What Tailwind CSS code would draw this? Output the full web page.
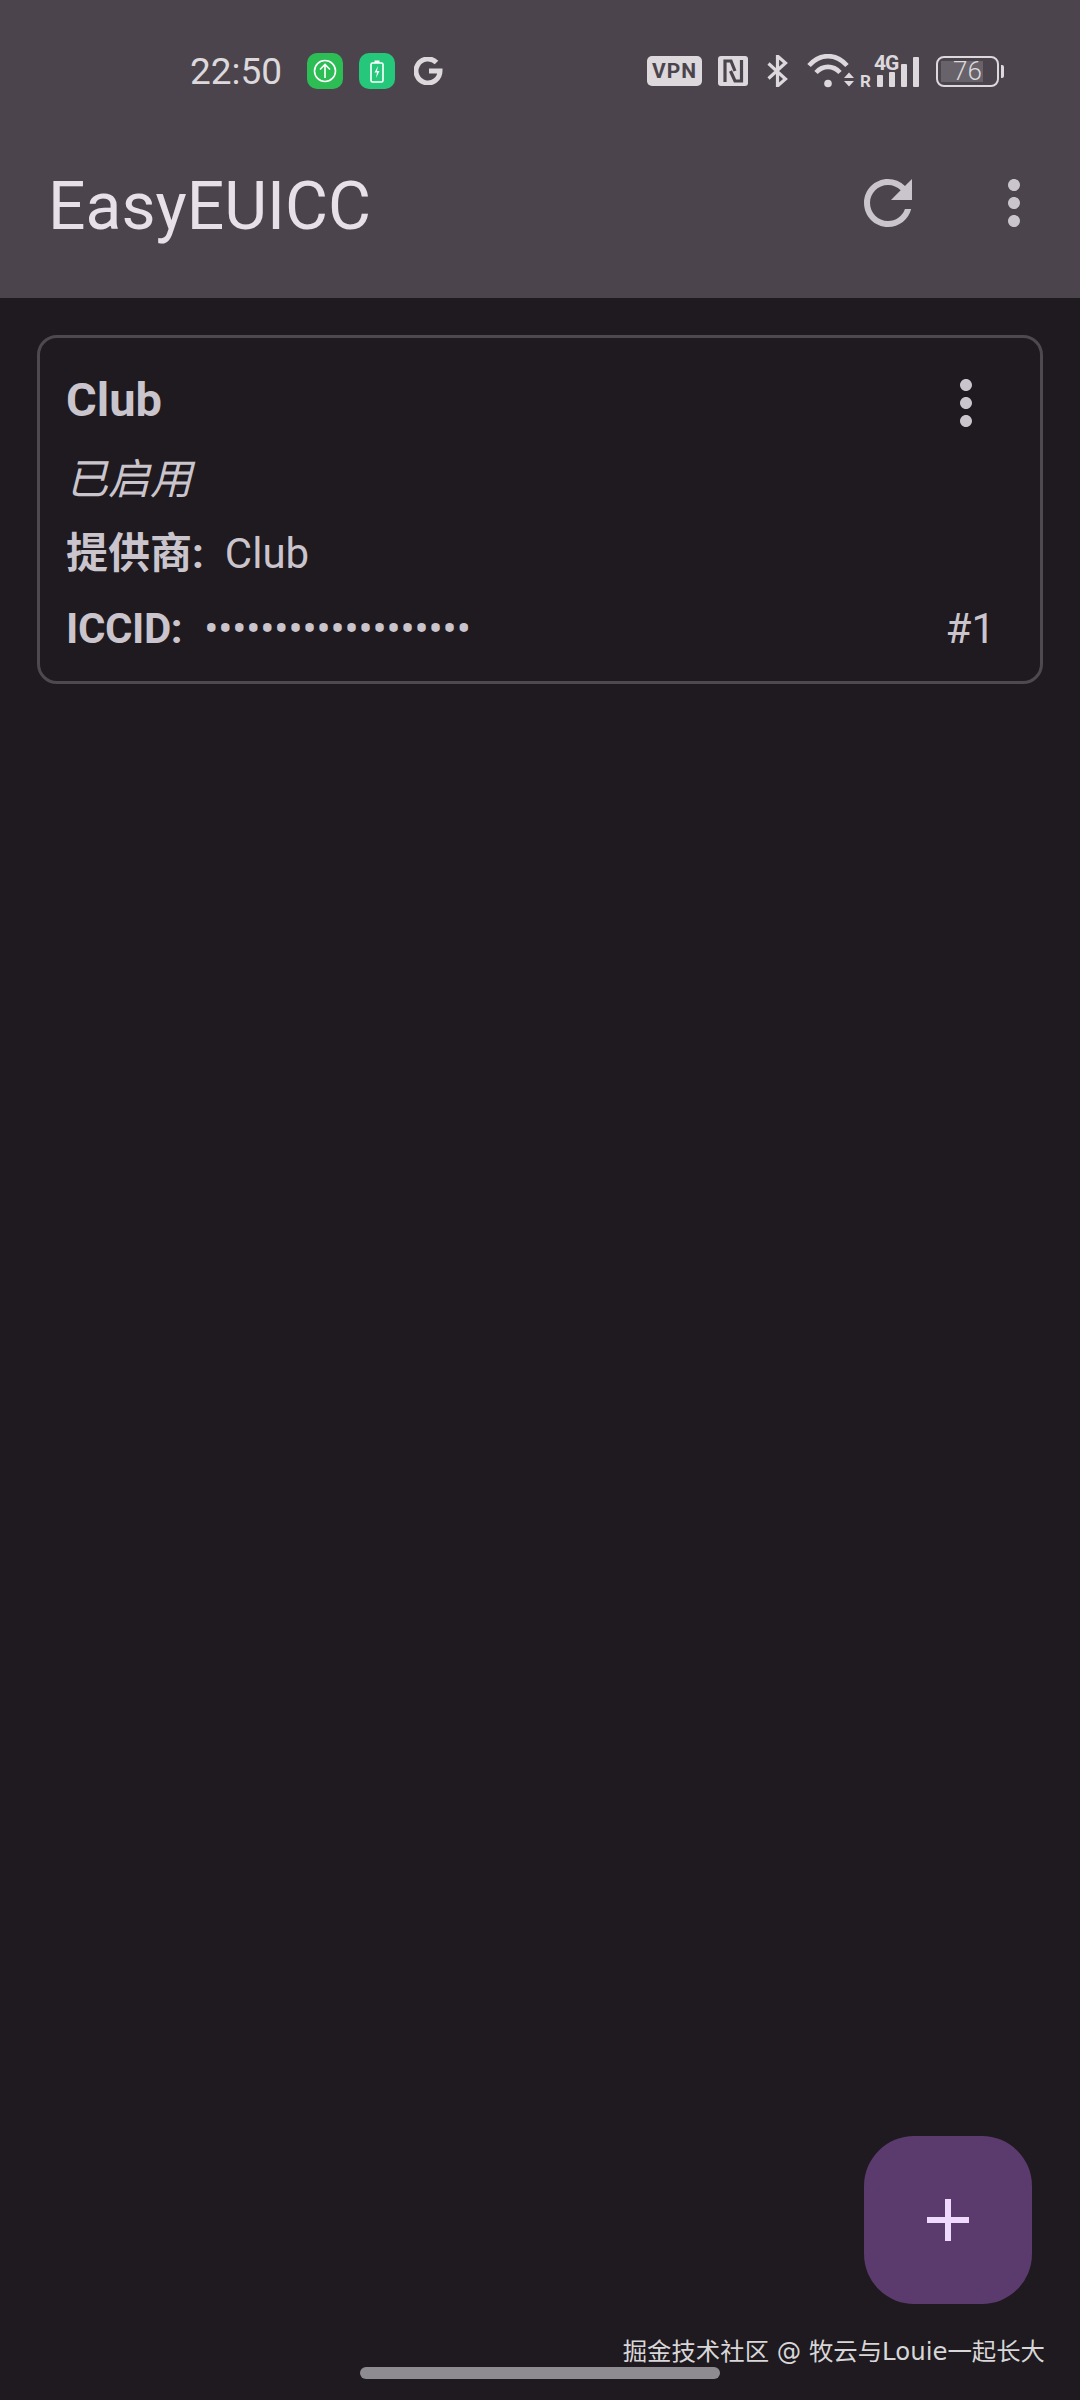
<!DOCTYPE html>
<html lang="zh-CN">
<head>
    <meta charset="UTF-8">
    <meta name="viewport" content="width=device-width, initial-scale=1">
    <title>EasyEUICC</title>
    <script src="https://cdn.jsdelivr.net/npm/@tailwindcss/browser@4"></script>
</head>
<body class="relative w-[1080px] h-[2400px] overflow-hidden bg-[#1e1a1f] font-['Roboto','Noto_Sans_CJK_SC',sans-serif] text-[#cac4cc]">
    <header class="h-[298px] bg-[#4b444c]">
        <!-- Status bar -->
        <div class="h-[142px] flex items-center text-[#dcd8dc]">
            <span class="ml-[190px] w-[117px] text-[37px] font-normal leading-none">22:50</span>
            <svg class="w-[36px] h-[36px]" viewBox="0 0 36 36">
                <rect width="36" height="36" rx="10" fill="#2dbd55"/>
                <circle cx="18" cy="18" r="10.5" fill="none" stroke="#fff" stroke-width="1.6"/>
                <path d="M18 25V12M13 16.5l5-5 5 5" fill="none" stroke="#fff" stroke-width="1.6"/>
            </svg>
            <svg class="ml-[16px] w-[36px] h-[36px]" viewBox="0 0 36 36">
                <rect width="36" height="36" rx="10" fill="#25c87b"/>
                <rect x="12" y="10" width="12" height="19" rx="1.5" fill="none" stroke="#fff" stroke-width="1.6"/>
                <path d="M15.5 7.5h5V10h-5z" fill="#fff"/>
                <path d="M19 13l-3.5 6.5h2.5L17 25l3.5-7H18z" fill="#fff"/>
            </svg>
            <svg class="ml-[19px] w-[29px] h-[28px]" viewBox="0 0 29 28">
                <path d="M22.5 5.5A12 12 0 1 0 26 14H15" fill="none" stroke="#dcd8dc" stroke-width="5"/>
            </svg>
            <span class="ml-[204px] w-[55px] h-[30px] rounded-[5px] bg-[#dcd8dc] text-[#4b444c] text-[21px] font-bold leading-[30px] tracking-[1px] text-center">VPN</span>
            <svg class="ml-[16px] w-[30px] h-[30px]" viewBox="0 0 30 30">
                <rect width="30" height="30" rx="3" fill="#dcd8dc"/>
                <path d="M7 26V5h6l4 10M23.500 4v21H17l-4.500-10" fill="none" stroke="#4b444c" stroke-width="3.200"/>
            </svg>
            <svg class="ml-[19px] w-[21px] h-[32px]" viewBox="0 0 21 32">
                <path d="M1.500 8.500l17 15.500-8 7V1l8 7-17 15.500" fill="none" stroke="#dcd8dc" stroke-width="3.200"/>
            </svg>
            <svg class="ml-[19px] w-[48px] h-[34px]" viewBox="0 0 48 34">
                <path d="M2 11.500C13-1 29-1 40 11.500" fill="none" stroke="#dcd8dc" stroke-width="4.600"/>
                <path d="M9 18.500C16 11 26 11 33 18.500" fill="none" stroke="#dcd8dc" stroke-width="4.600"/>
                <circle cx="21" cy="29.500" r="3.800" fill="#dcd8dc"/>
                <path d="M37 24l5-5.500 5 5.500zM37 27l5 5.500 5-5.500z" fill="#dcd8dc"/>
            </svg>
            <div class="relative ml-[6px] w-[59px] h-[34px]">
                <span class="absolute left-[-1px] bottom-0 text-[17px] font-bold leading-[14px]">R</span>
                <span class="absolute left-[13px] top-0 text-[21px] font-bold leading-[18px] tracking-[-1px]">4G</span>
                <div class="absolute left-[16px] right-[0px] bottom-[1px] flex items-end gap-[6px]">
                    <i class="block w-[6px] h-[12px] rounded-[1px] bg-[#dcd8dc]"></i>
                    <i class="block w-[6px] h-[15px] rounded-[1px] bg-[#dcd8dc]"></i>
                    <i class="block w-[6px] h-[23px] rounded-[1px] bg-[#dcd8dc]"></i>
                    <i class="block w-[6px] h-[30px] rounded-[1px] bg-[#dcd8dc]"></i>
                </div>
            </div>
            <div class="ml-[16px] relative w-[63px] h-[31px] rounded-[8px] border-2 border-[#dcd8dc] p-[3px]">
                <div class="w-[42px] h-full bg-[#68626b]"></div>
                <span class="absolute inset-0 pl-[15px] text-[26px] font-light leading-[27px]">76</span>
                <i class="absolute right-[-7px] top-[7px] block w-[3px] h-[13px] rounded-r-[2px] bg-[#dcd8dc]"></i>
            </div>
        </div>
        <!-- Toolbar -->
        <div class="h-[156px] pb-[34px] pl-[48px] pr-[30px] flex items-center">
            <h1 class="flex-1 mt-[8px] text-[66px] leading-none text-[#e8e0e8]">EasyEUICC</h1>
            <svg class="w-[72px] h-[72px]" viewBox="0 0 24 24" fill="#cac4cc">
                <path d="M17.650 6.350A7.958 7.958 0 0 0 12 4c-4.420 0-7.990 3.580-7.990 8s3.570 8 7.990 8c3.730 0 6.840-2.550 7.730-6h-2.080A5.990 5.990 0 0 1 12 18c-3.310 0-6-2.690-6-6s2.690-6 6-6c1.660 0 3.140.690 4.220 1.780L13 11h7V4l-2.350 2.350z"/>
            </svg>
            <svg class="ml-[54px] w-[72px] h-[72px]" viewBox="0 0 24 24" fill="#cac4cc">
                <path d="M12 8c1.100 0 2-.9 2-2s-.9-2-2-2-2 .9-2 2 .9 2 2 2zm0 2c-1.100 0-2 .9-2 2s.9 2 2 2 2-.9 2-2-.9-2-2-2zm0 6c-1.100 0-2 .9-2 2s.9 2 2 2 2-.9 2-2-.9-2-2-2z"/>
            </svg>
        </div>
    </header>

    <main class="px-[37px] pt-[37px]">
        <!-- Profile card -->
        <div class="h-[349px] rounded-[20px] border-[3px] border-[#4d494f] pt-[29px] pl-[26px]">
            <div class="h-[64px] flex justify-between pr-[38px]">
                <span class="mt-[1px] text-[47px] font-bold leading-[64px]">Club</span>
                <svg class="w-[72px] h-[72px] shrink-0" viewBox="0 0 24 24" fill="#cac4cc">
                    <path d="M12 8c1.100 0 2-.9 2-2s-.9-2-2-2-2 .9-2 2 .9 2 2 2zm0 2c-1.100 0-2 .9-2 2s.9 2 2 2 2-.9 2-2-.9-2-2-2zm0 6c-1.100 0-2 .9-2 2s.9 2 2 2 2-.9 2-2-.9-2-2-2z"/>
                </svg>
            </div>
            <div class="mt-[17px] text-[42px] italic leading-[64px]">已启用</div>
            <div class="mt-[10px] text-[42px] leading-[64px]"><b class="font-bold">提供商:</b><span class="ml-[21px]">Club</span></div>
            <div class="mt-[11px] flex justify-between pr-[45px] text-[42px] leading-[64px]">
                <div><b class="font-bold tracking-[-0.4px]">ICCID:</b><span class="ml-[22px] tracking-[-0.15px]">•••••••••••••••••••</span></div>
                <span>#1</span>
            </div>
        </div>
    </main>

    <!-- FAB -->
    <button class="absolute left-[864px] top-[2136px] w-[168px] h-[168px] rounded-[50px] bg-[#5b3a6e] flex items-center justify-center">
        <svg class="w-[42px] h-[42px]" viewBox="0 0 42 42"><path d="M18 0h6v18h18v6H24v18h-6V24H0v-6h18z" fill="#f0d9ff"/></svg>
    </button>

    <!-- Watermark -->
    <span class="absolute right-[35px] top-[2335px] text-[24.4px] leading-[34px] text-[#d8d6d8] font-['DejaVu_Sans','Noto_Sans_CJK_SC',sans-serif]">掘金技术社区 @ 牧云与Louie一起长大</span>

    <!-- Home bar -->
    <div class="absolute left-[360px] top-[2367px] w-[360px] h-[12px] rounded-full bg-[#8e8c90]"></div>
</body>
</html>
